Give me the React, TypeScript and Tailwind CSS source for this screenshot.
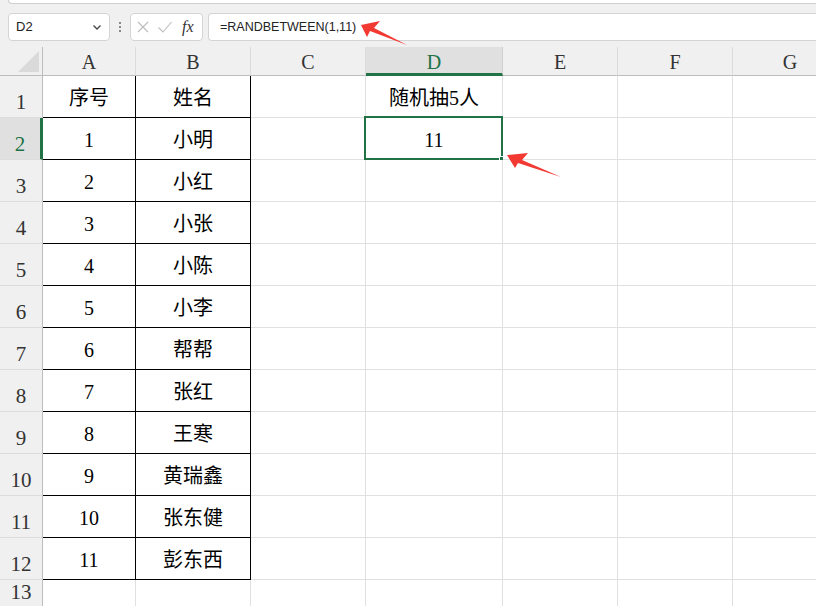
import React from 'react'

const COLS = [
  { key: 'A', w: 'w-[93px]' },
  { key: 'B', w: 'w-[115px]' },
  { key: 'C', w: 'w-[115px]' },
  { key: 'D', w: 'w-[137px]' },
  { key: 'E', w: 'w-[115px]' },
  { key: 'F', w: 'w-[115px]' },
  { key: 'G', w: 'w-[115px]' },
]

const DATA: [string, string][] = [
  ['序号', '姓名'],
  ['1', '小明'],
  ['2', '小红'],
  ['3', '小张'],
  ['4', '小陈'],
  ['5', '小李'],
  ['6', '帮帮'],
  ['7', '张红'],
  ['8', '王寒'],
  ['9', '黄瑞鑫'],
  ['10', '张东健'],
  ['11', '彭东西'],
  ['', ''],
]

const serif = "font-['Liberation_Serif','Noto_Sans_CJK_SC',serif]"

function FormulaBar() {
  return (
    <div className="flex items-center h-[28px] mt-[9px] font-['Liberation_Sans','Noto_Sans_CJK_SC',sans-serif] text-[13px] text-[#222]">
      {/* name box */}
      <div className="ml-[8px] w-[102px] h-full bg-white border border-[#d4d4d4] rounded-[4px] flex items-center justify-between pl-[7px] pr-[6px]">
        <span>D2</span>
        <svg width="12" height="12" viewBox="0 0 12 12" fill="none" stroke="#444" strokeWidth="1.3">
          <path d="M2.5 4.5 L6 8 L9.5 4.5" />
        </svg>
      </div>
      <div className="w-[20px] flex flex-col items-center gap-[2px]">
        <span className="w-[2px] h-[2px] bg-[#888]" />
        <span className="w-[2px] h-[2px] bg-[#888]" />
        <span className="w-[2px] h-[2px] bg-[#888]" />
      </div>
      {/* cancel / enter / fx */}
      <div className="w-[73px] h-full bg-white border border-[#d4d4d4] rounded-[4px] flex items-center pl-[5px] gap-[7px]">
        <svg width="14" height="14" viewBox="0 0 14 14" fill="none" stroke="#bdbdbd" strokeWidth="1.1">
          <path d="M2 2 L12 12 M12 2 L2 12" />
        </svg>
        <svg width="16" height="14" viewBox="0 0 16 14" fill="none" stroke="#bdbdbd" strokeWidth="1.1">
          <path d="M1.5 7.5 L6 12 L14.5 2" />
        </svg>
        <span className="font-['Liberation_Serif',serif] italic text-[16px] text-[#333] ml-[2px]">fx</span>
      </div>
      {/* formula */}
      <div className="ml-[5px] flex-1 h-full bg-white border border-r-0 border-[#d4d4d4] rounded-l-[4px] flex items-center pl-[11px] text-[12.5px]">
        =RANDBETWEEN(1,11)
      </div>
    </div>
  )
}

function HeaderRow() {
  return (
    <div className={`flex h-[29px] ${serif}`}>
      <div className="w-[43px] shrink-0 h-full border-r border-b border-[#bdbdbd] bg-[#f0f0f0] relative">
        <svg className="absolute left-[18px] top-[4px]" width="22" height="22" viewBox="0 0 22 22">
          <polygon points="21,0 21,21 0,21" fill="#dadada" />
        </svg>
      </div>
      {COLS.map(c => {
        const active = c.key === 'D'
        return (
          <div
            key={c.key}
            className={`${c.w} shrink-0 h-full flex items-center justify-center text-[20px] ${
              active
                ? 'bg-[#e0e0e0] border-b-[3px] border-b-[#217346] border-r border-r-[#d0d0d0] text-[#217346]'
                : 'bg-[#f0f0f0] border-b border-b-[#bdbdbd] border-r border-r-[#dcdcdc] text-[#333]'
            }`}
          >
            <span className={active ? 'mt-[3px]' : 'mt-[1px]'}>{c.key}</span>
          </div>
        )
      })}
    </div>
  )
}

function Row({ n, a, b }: { n: number; a: string; b: string }) {
  const inTable = n <= 12
  const rowActive = n === 2
  return (
    <div className={`flex ${n === 13 ? 'h-[28px]' : 'h-[42px]'} shrink-0 ${serif}`}>
      <div
        className={`w-[43px] shrink-0 h-full border-b border-b-[#dcdcdc] flex items-end justify-center pb-[2px] text-[21px] leading-none ${
          rowActive
            ? 'bg-[#e0e0e0] border-r-[3px] border-r-[#217346] text-[#217346]'
            : 'bg-[#f0f0f0] border-r border-r-[#bdbdbd] text-[#333]'
        }`}
      >
        <span className="pb-[2px]">{n}</span>
      </div>
      {COLS.map(c => {
        const tableCell = inTable && (c.key === 'A' || c.key === 'B')
        let text = ''
        if (c.key === 'A') text = a
        if (c.key === 'B') text = b
        if (c.key === 'D' && n === 1) text = '随机抽5人'
        if (c.key === 'D' && n === 2) text = '11'
        const selected = c.key === 'D' && n === 2
        return (
          <div
            key={c.key}
            className={`${c.w} shrink-0 h-full bg-white relative flex items-center justify-center pt-[3px] text-[20px] text-black ${
              tableCell ? 'border-r border-b border-black' : 'border-r border-b border-[#e0e0e0]'
            }`}
          >
            {text}
            {selected && (
              <>
                <div className="absolute -left-[2px] -top-[2px] -right-[1px] -bottom-[1px] border-2 border-[#217346]" />
                <div className="absolute -right-[4px] -bottom-[4px] w-[7px] h-[7px] bg-[#217346] border border-white" />
              </>
            )}
          </div>
        )
      })}
    </div>
  )
}

export default function App() {
  return (
    <div className="w-[816px] h-[606px] bg-[#f0f0f0] relative overflow-hidden">
      <div className="ml-[8px] h-[4px] bg-white border-b border-l border-[#cfcfcf] rounded-bl-[4px]" />
      <FormulaBar />
      <div className="mt-[6px]">
        <HeaderRow />
        {DATA.map(([a, b], i) => (
          <Row key={i} n={i + 1} a={a} b={b} />
        ))}
      </div>

      {/* red annotation arrows */}
      <svg className="absolute left-0 top-0 pointer-events-none" width="816" height="606" viewBox="0 0 816 606">
        <polygon points="361,25 380,21 374,28 407,45 370,31 367,37" fill="#f23a33" />
        <polygon points="507,155 528,153 522,160 561,177 518,163 515,168" fill="#f23a33" />
      </svg>
    </div>
  )
}
